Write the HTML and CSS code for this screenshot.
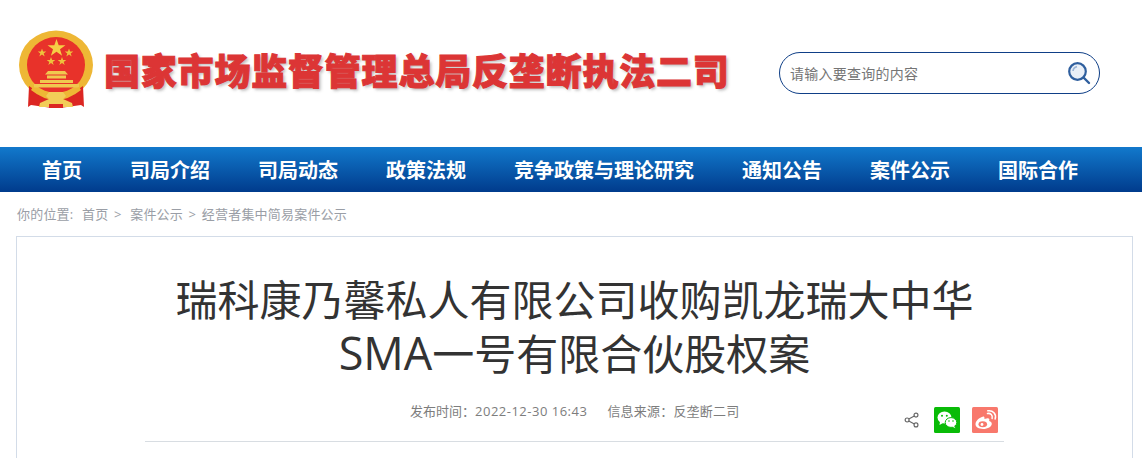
FILE: index.html
```html
<!DOCTYPE html>
<html lang="zh-CN">
<head>
<meta charset="utf-8">
<title>瑞科康乃馨私人有限公司收购凯龙瑞大中华SMA一号有限合伙股权案</title>
<link rel="stylesheet" href="styles.css">
</head>
<body>
<header class="top">
  <div class="brand">
    <svg class="emblem" viewBox="0 0 76 80" aria-hidden="true">
      <defs>
        <filter id="soft"><feGaussianBlur stdDeviation="0.5"/></filter>
      </defs>
      <g filter="url(#soft)">
        <ellipse cx="38" cy="36" rx="37" ry="34.500" fill="#eeb735"/>
        <ellipse cx="38" cy="36" rx="29" ry="28" fill="#e8302a"/>
        <polygon fill="#f5cf45" points="38.500,10 40.700,16.300 47.500,16.300 42,20.300 44.100,26.800 38.500,22.800 32.900,26.800 35,20.300 29.500,16.300 36.300,16.300"/>
        <polygon fill="#eec23c" points="24,19.500 25.100,22.500 28.300,22.500 25.700,24.400 26.700,27.500 24,25.600 21.300,27.500 22.300,24.400 19.700,22.500 22.900,22.500"/>
        <polygon fill="#eec23c" points="51,19.500 52.100,22.500 55.300,22.500 52.700,24.400 53.700,27.500 51,25.600 48.300,27.500 49.300,24.400 46.700,22.500 49.900,22.500"/>
        <polygon fill="#eec23c" points="33,28 34.100,31 37.300,31 34.700,32.900 35.700,36 33,34.100 30.300,36 31.300,32.900 28.700,31 31.900,31"/>
        <polygon fill="#eec23c" points="44,28 45.100,31 48.300,31 45.700,32.900 46.700,36 44,34.100 41.300,36 42.300,32.900 39.700,31 42.900,31"/>
        <path fill="#f0c850" d="M30 42h17l3 3.500H27zM29 46.500h19v3H29zM22 51h33v3H22zM16 55h45v3.500H16z"/>
        <path fill="#dc2823" d="M11 57 L26 67 L34 69 L34 79 L13 76 L10 78 Z"/>
        <path fill="#dc2823" d="M65 57 L50 67 L42 69 L42 79 L63 76 L66 78 Z"/>
        <path fill="#eeb735" d="M15 58 Q38 76 61 58 L63 61 Q38 81 13 61Z"/>
        <path fill="#f2cd58" d="M31 63h14l3 4-3 3 9 4 1 4H21l1-4 9-4-3-3z"/>
        <rect x="31" y="75" width="14" height="4" fill="#dc2823"/>
      </g>
    </svg>
    <div class="site-name">国家市场监督管理总局反垄断执法二司</div>
  </div>
  <form class="search">
    <span class="search-hint">请输入要查询的内容</span>
    <svg class="search-icon" viewBox="0 0 24 24" aria-hidden="true">
      <circle cx="10.500" cy="10.500" r="8.300" fill="#e9eff7" stroke="#2f5f9e" stroke-width="2.200"/>
      <path d="M6 10a5 5 0 0 1 4-4.400" fill="none" stroke="#9db6d6" stroke-width="1.600"/>
      <path d="M16.500 16.500 22 22" stroke="#2f5f9e" stroke-width="2.400" stroke-linecap="round"/>
    </svg>
  </form>
</header>
<nav class="nav">
  <a>首页</a>
  <a>司局介绍</a>
  <a>司局动态</a>
  <a>政策法规</a>
  <a>竞争政策与理论研究</a>
  <a>通知公告</a>
  <a>案件公示</a>
  <a>国际合作</a>
</nav>
<div class="crumbs">
  <span class="crumb-label">你的位置:</span>
  <span class="crumb-a">首页 &gt;</span>
  <span class="crumb-b">案件公示 &gt; 经营者集中简易案件公示</span>
</div>
<main class="card">
  <h1 class="title">瑞科康乃馨私人有限公司收购凯龙瑞大中华<br><span class="title-latin">SMA</span>一号有限合伙股权案</h1>
  <div class="meta">
    <span class="meta-date">发布时间：<span class="meta-num">2022-12-30 16:43</span></span>
    <span class="meta-source">信息来源：反垄断二司</span>
    <div class="share">
      <svg class="share-icon" viewBox="0 0 18 18" aria-hidden="true">
        <g fill="none" stroke="#666" stroke-width="1.300">
          <circle cx="13.500" cy="3.500" r="2.200"/>
          <circle cx="3.500" cy="9" r="2.200"/>
          <circle cx="13.500" cy="14.500" r="2.200"/>
          <path d="M5.400 7.900 11.600 4.600M5.400 10.100 11.600 13.400"/>
        </g>
      </svg>
      <svg class="tile" viewBox="0 0 26 26" aria-hidden="true">
        <rect width="26" height="26" rx="1.500" fill="#09bb07"/>
        <ellipse cx="10.500" cy="10.500" rx="7" ry="6" fill="#fff"/>
        <path d="M6 14.500 5.500 18l3.500-2z" fill="#fff"/>
        <ellipse cx="17" cy="15.500" rx="5.800" ry="4.900" fill="#fff" stroke="#09bb07" stroke-width="1"/>
        <path d="M20 19l1.500 2.200-3.600-1.600z" fill="#fff"/>
        <circle cx="8" cy="8.700" r="1" fill="#09bb07"/>
        <circle cx="12.800" cy="8.700" r="1" fill="#09bb07"/>
        <circle cx="15" cy="14" r=".8" fill="#09bb07"/>
        <circle cx="19" cy="14" r=".8" fill="#09bb07"/>
      </svg>
      <svg class="tile" viewBox="0 0 26 26" aria-hidden="true">
        <rect width="26" height="26" rx="1.500" fill="#f8786c"/>
        <path d="M11.500 9.500C7 10.500 3.500 14 3.500 17.300c0 2.800 3.500 4.700 7.600 4.700 4.800 0 8.700-2.500 8.700-5.300 0-1.900-2-2.500-2.700-2.800.6-1.500.4-2.800-2.200-2.500-1 .1-2 .5-2.400.7.100-1.600-.3-2.900-1-2.600z" fill="#fff"/>
        <ellipse cx="10.800" cy="17.300" rx="4.300" ry="3" fill="#f8786c"/>
        <circle cx="10" cy="17.500" r="1.400" fill="#fff"/>
        <path d="M15.500 6.500c3-.7 5.500 2 4.600 5M15.800 3.800c5-1 9 3.500 7.300 8.300" fill="none" stroke="#fff" stroke-width="1.500" stroke-linecap="round"/>
      </svg>
    </div>
  </div>
</main>
</body>
</html>
```
FILE: styles.css
```css
* { box-sizing: border-box; }
html, body { margin: 0; padding: 0; }
body {
  background: #fff;
  height: 458px;
  overflow: hidden;
  font-family: "Open Sans", "Noto Sans CJK SC", sans-serif;
}
.top {
  height: 147px;
  display: flex;
  align-items: flex-start;
  justify-content: space-between;
  padding: 29px 42px 0 18px;
}
.brand {
  display: flex;
  align-items: flex-start;
}
.emblem {
  width: 76px;
  height: 80px;
  display: block;
}
.site-name {
  margin: 14px 0 0 10px;
  font-family: "Noto Sans CJK SC", sans-serif;
  font-size: 36px;
  line-height: 52px;
  font-weight: 900;
  letter-spacing: 0.8px;
  white-space: nowrap;
  color: #dc3535;
  -webkit-text-stroke: 1px #dc3535;
  text-shadow: 2px 2px 3px rgba(90, 90, 90, 0.4);
}
.search {
  width: 321px;
  height: 42px;
  margin-top: 23px;
  border: 1px solid #0f3f87;
  border-radius: 21px;
  display: flex;
  align-items: center;
  justify-content: space-between;
  padding: 0 8px 0 10px;
}
.search-hint {
  font-size: 14px;
  letter-spacing: 0.25px;
  color: #757575;
}
.search-icon {
  width: 24px;
  height: 24px;
}
.nav {
  height: 45px;
  display: flex;
  align-items: center;
  gap: 48px;
  padding-left: 42px;
  background: linear-gradient(#1279cc, #003b8c);
}
.nav a {
  color: #fff;
  font-family: "Noto Sans CJK SC", sans-serif;
  font-size: 20px;
  font-weight: 700;
  line-height: 45px;
  white-space: nowrap;
}
.crumbs {
  height: 44px;
  padding: 13px 0 0 17px;
  font-size: 13px;
  line-height: 19px;
  letter-spacing: 0.2px;
  word-spacing: 2px;
  color: #9a9ea6;
  white-space: nowrap;
}
.crumb-a { margin-left: 3px; }
.crumb-b { margin-left: 3px; }
.card {
  margin: 0 9px 0 16px;
  height: 222px;
  border: 1px solid #d3dce8;
  border-bottom: 0;
  padding: 36px 128px 0;
}
.title {
  margin: 0;
  font-size: 42px;
  line-height: 54px;
  font-weight: 400;
  text-align: center;
  color: #333;
}
.title-latin { font-size: 45px; line-height: 40px; }
.meta {
  margin-top: 21px;
  height: 40px;
  border-bottom: 1px solid #d8dde2;
  display: flex;
  align-items: flex-start;
  padding-left: 265px;
  font-size: 13px;
  line-height: 19px;
  color: #7d7d7d;
  white-space: nowrap;
}
.meta-date { margin-right: 20px; }
.meta-num { letter-spacing: 0.5px; }
.meta-source { letter-spacing: 0.2px; }
.share {
  margin-left: auto;
  margin-top: 5px;
  display: flex;
  align-items: center;
  gap: 12px;
  padding-right: 6px;
}
.share-icon { width: 16px; height: 18px; margin-right: 2px; }
.tile { width: 26px; height: 26px; display: block; }
```
